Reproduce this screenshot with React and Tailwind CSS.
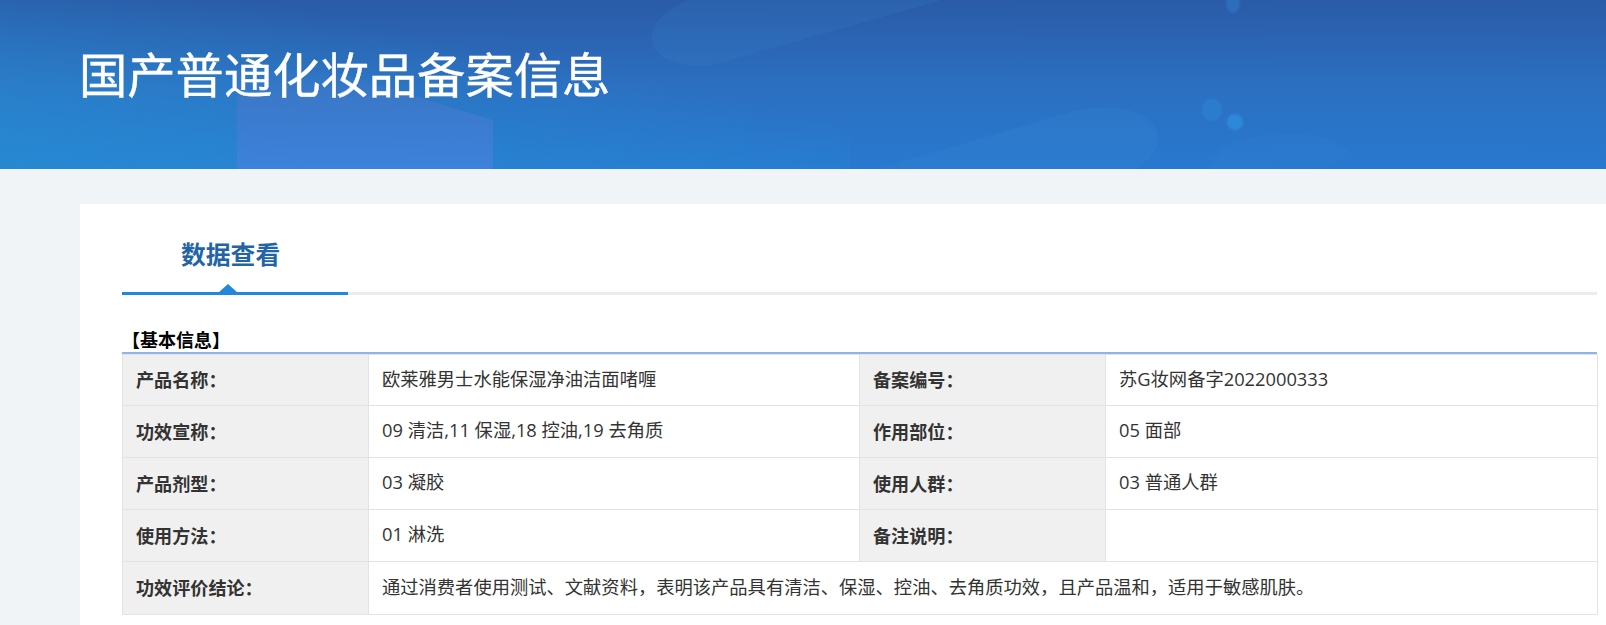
const FONT = "font-['Open_Sans','Noto_Sans_CJK_SC',sans-serif]";

function HeaderArt() {
  return (
    <svg className="absolute inset-0 w-full h-full" viewBox="0 0 1606 169" preserveAspectRatio="none" aria-hidden="true">
      <defs>
        <linearGradient id="bg" x1="0" y1="0" x2="0" y2="1">
          <stop offset="0" stopColor="#2a5ba7" />
          <stop offset="0.5" stopColor="#2c6fc0" />
          <stop offset="1" stopColor="#2779d0" />
        </linearGradient>
        <linearGradient id="left" x1="0" y1="1" x2="1" y2="0">
          <stop offset="0" stopColor="#2790d4" stopOpacity="0.7" />
          <stop offset="0.65" stopColor="#2790d4" stopOpacity="0" />
        </linearGradient>
        <linearGradient id="block" x1="0" y1="0" x2="0" y2="1">
          <stop offset="0" stopColor="#3f78ca" stopOpacity="0.15" />
          <stop offset="0.3" stopColor="#3f78ca" stopOpacity="0.8" />
          <stop offset="1" stopColor="#3d82dc" />
        </linearGradient>
        <filter id="soft"><feGaussianBlur stdDeviation="1.2" /></filter>
      </defs>
      <rect width="1606" height="169" fill="url(#bg)" />
      <rect width="850" height="169" fill="url(#left)" />
      <path d="M237 169V70H330L493 120V169Z" fill="url(#block)" />
      <path d="M652 35C655 15 680 2 700 -5H960L720 63C690 72 648 60 652 35Z" fill="#3a8ad0" opacity="0.15" />
      <path d="M877 169L1060 115C1110 98 1158 112 1158 137C1158 152 1148 162 1135 169Z" fill="#3a8ad2" opacity="0.22" />
      <path d="M1225 146C1270 127 1335 132 1347 150C1347 160 1330 169 1310 169H1205Z" fill="#3a8ad8" opacity="0.12" />
      <g filter="url(#soft)">
        <ellipse cx="1233" cy="4" rx="7" ry="9" fill="#2f7ccc" opacity="0.55" />
        <ellipse cx="1212" cy="110" rx="10" ry="11" fill="#2f83d4" opacity="0.6" />
        <ellipse cx="1235" cy="122" rx="8" ry="8" fill="#2f8bdc" opacity="0.9" />
      </g>
    </svg>
  );
}

function Label({ children }) {
  return (
    <td className="border border-[#e3e3e3] bg-[#f0f0f0] pl-[13px] pt-[2px] text-[18.1px] font-bold text-[#333333]">
      {children}
    </td>
  );
}

function Value({ children, span }) {
  return (
    <td colSpan={span} className="border border-[#e3e3e3] bg-white pl-[13px] pb-[3px] text-[18.3px] text-[#333333]">
      {children}
    </td>
  );
}

export default function App() {
  return (
    <div className={`${FONT} w-[1606px] h-[625px] overflow-hidden bg-[#f0f4f7]`}>
      <header className="relative h-[169px] pl-[79px] overflow-hidden">
        <HeaderArt />
        <h1 className="relative pt-[38px] text-[48.3px] leading-[72px] font-normal text-white [-webkit-text-stroke:0.4px_white]">国产普通化妆品备案信息</h1>
      </header>
      <main className="ml-20 mt-[35px] h-[500px] bg-white pl-[42px] pr-[9px]">
        <div className="relative h-[91px] border-b-[3px] border-[#ececec]">
          <div className="absolute left-0 -bottom-[3px] w-[226px] h-[3px] bg-[#2288dd]" />
          <div className="absolute left-[96px] -bottom-[1px] w-0 h-0 border-x-[10px] border-x-transparent border-b-[9px] border-b-[#2288dd]" />
          <div className="pl-[59px] pt-[32px] text-[24.8px] leading-9 font-bold text-[#1f65a8]">数据查看</div>
        </div>
        <div className="mt-[33px] h-[24px] text-lg leading-6 font-bold text-black">【基本信息】</div>
        <div className="w-[1475px] h-[2px] bg-[#8fb4e6]" />
        <table className="w-[1475px] table-fixed border-collapse">
          <colgroup>
            <col className="w-[246px]" />
            <col className="w-[491px]" />
            <col className="w-[246px]" />
            <col className="w-[492px]" />
          </colgroup>
          <tbody>
            <tr className="h-[51px]">
              <Label>产品名称：</Label>
              <Value>欧莱雅男士水能保湿净油洁面啫喱</Value>
              <Label>备案编号：</Label>
              <Value>苏G妆网备字2022000333</Value>
            </tr>
            <tr className="h-[52px]">
              <Label>功效宣称：</Label>
              <Value>09 清洁,11 保湿,18 控油,19 去角质</Value>
              <Label>作用部位：</Label>
              <Value>05 面部</Value>
            </tr>
            <tr className="h-[52px]">
              <Label>产品剂型：</Label>
              <Value>03 凝胶</Value>
              <Label>使用人群：</Label>
              <Value>03 普通人群</Value>
            </tr>
            <tr className="h-[52px]">
              <Label>使用方法：</Label>
              <Value>01 淋洗</Value>
              <Label>备注说明：</Label>
              <Value />
            </tr>
            <tr className="h-[53px]">
              <Label>功效评价结论：</Label>
              <Value span={3}>通过消费者使用测试、文献资料，表明该产品具有清洁、保湿、控油、去角质功效，且产品温和，适用于敏感肌肤。</Value>
            </tr>
          </tbody>
        </table>
      </main>
    </div>
  );
}
